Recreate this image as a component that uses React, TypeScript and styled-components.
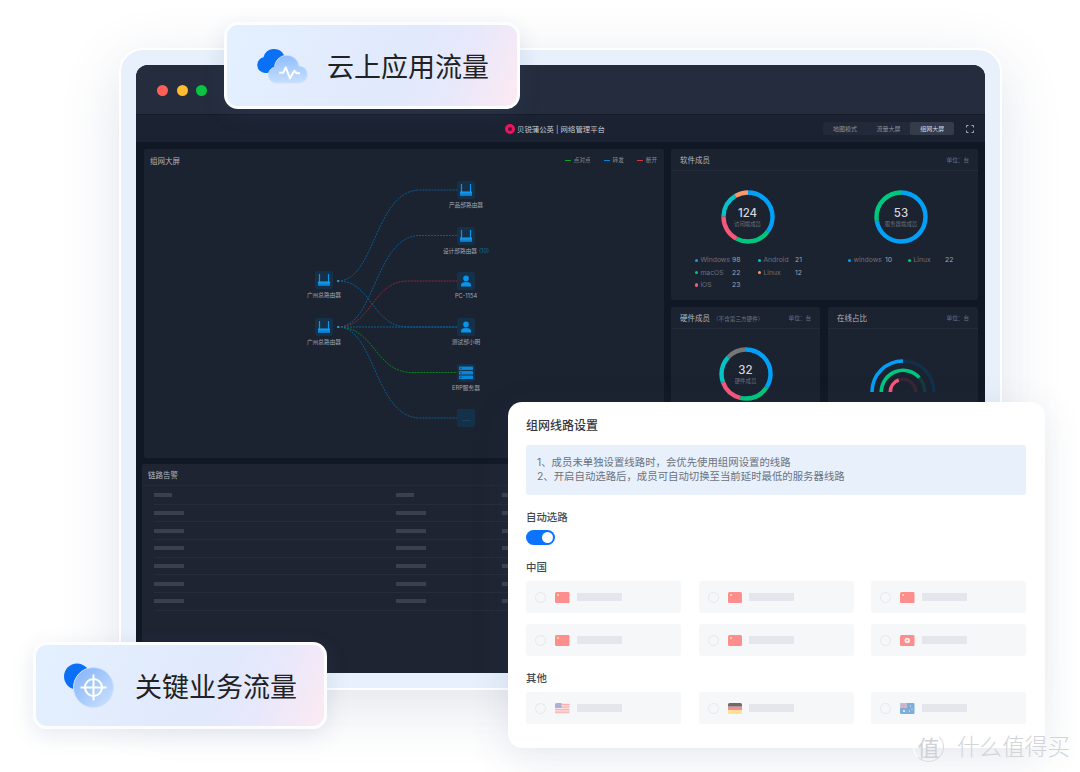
import React from 'react';
import styled, { createGlobalStyle } from 'styled-components';

const GlobalStyle = createGlobalStyle`
  html, body {
    margin: 0;
    padding: 0;
    background: #fff;
  }
  body {
    font-family: 'Inter', 'Noto Sans CJK SC', 'Noto Sans', sans-serif;
  }
  * {
    box-sizing: border-box;
  }
`;

const Page = styled.div`
  position: relative;
  width: 1080px;
  height: 772px;
  padding: 48px 78px 0 119px;
  overflow: hidden;
  background: #fff;
`;

const Device = styled.div`
  width: 883px;
  height: 642px;
  padding: 15px;
  border: 2px solid #fff;
  border-radius: 24px;
  background: #e7f0fb;
  box-shadow: 0 16px 60px rgba(70, 90, 130, 0.16);
`;

const Screen = styled.div`
  display: flex;
  flex-direction: column;
  height: 100%;
  border-radius: 12px 12px 0 0;
  overflow: hidden;
  background: #111825;
`;

const TitleBar = styled.div`
  display: flex;
  align-items: center;
  gap: 8.7px;
  flex: none;
  height: 50px;
  padding-left: 21px;
  padding-top: 2px;
  background: #242c3d;
  border-bottom: 1px solid #151b28;
`;

const Light = styled.span<{ $color: string }>`
  width: 11px;
  height: 11px;
  border-radius: 50%;
  background: ${(p) => p.$color};
`;

const Header = styled.div`
  display: grid;
  grid-template-columns: 1fr auto 1fr;
  align-items: center;
  flex: none;
  height: 27px;
  padding-right: 11px;
  background: #1b2231;
`;

const Brand = styled.div`
  display: flex;
  align-items: center;
  grid-column: 2;
  gap: 2px;
  font-size: 7.4px;
  color: #c6cad2;
  white-space: nowrap;
`;

const BrandMark = styled.span`
  width: 10px;
  height: 10px;
  border: 3px solid #f0135f;
  border-radius: 50%;
  background: #5c1236;
`;

const HeaderRight = styled.div`
  display: flex;
  align-items: center;
  justify-content: flex-end;
  gap: 12px;
`;

const Tabs = styled.div`
  display: flex;
  border-radius: 2px;
  background: #222938;
`;

const Tab = styled.span<{ $active?: boolean }>`
  width: 43.6px;
  height: 13px;
  border-radius: 2px;
  font-size: 6px;
  line-height: 13px;
  text-align: center;
  color: ${(p) => (p.$active ? '#d6d9df' : '#8b919c')};
  background: ${(p) => (p.$active ? '#343b4b' : 'transparent')};
`;

const Body = styled.div`
  display: grid;
  grid-template-columns: 520px 307px;
  gap: 7px;
  flex: 1;
  min-height: 0;
  padding: 7px 8px 0;
`;

const Column = styled.div`
  display: flex;
  flex-direction: column;
  min-height: 0;
  gap: 6px;
`;

const Panel = styled.section`
  background: #1b2230;
  border-radius: 2px;
`;

const GraphPanel = styled(Panel)`
  flex: none;
  height: 309px;
`;

const AlarmPanel = styled(Panel)`
  flex: 1;
  margin-left: -2px;
  background: #1e2432;
`;

const PanelHead = styled.div<{ $line?: boolean }>`
  display: flex;
  align-items: center;
  justify-content: space-between;
  height: 22px;
  padding: 0 8px 0 6px;
  border-bottom: ${(p) => (p.$line ? '1px solid #232a39' : 'none')};
`;

const PanelTitle = styled.h3`
  margin: 0;
  font-size: 7.5px;
  font-weight: 400;
  color: #b2b6be;
  white-space: nowrap;
`;

const TitleNote = styled.small`
  margin-left: 3px;
  font-size: 5.6px;
  color: #6f7580;
`;

const Unit = styled.span`
  font-size: 5.6px;
  color: #6f7580;
  white-space: nowrap;
`;

const LineLegend = styled.div`
  display: flex;
  margin-right: -1px;
  gap: 13px;
  font-size: 5.6px;
  color: #858b96;
`;

const LegendKey = styled.span<{ $color: string }>`
  display: flex;
  align-items: center;
  gap: 3px;
  &::before {
    content: '';
    width: 6px;
    height: 1px;
    background: ${(p) => p.$color};
  }
`;

const Canvas = styled.div`
  position: relative;
  height: 287px;
`;

const Wires = styled.svg`
  position: absolute;
  top: 0;
  left: 0;
`;

const GraphNode = styled.div`
  position: absolute;
  display: flex;
  flex-direction: column;
  align-items: center;
  width: 90px;
  margin-left: -45px;
  margin-top: -9px;
  gap: 2px;
`;

const NodeTile = styled.div`
  display: grid;
  place-items: center;
  width: 18px;
  height: 18px;
  border-radius: 2px;
  background: #153049;
  font-size: 6px;
  color: #62788e;
`;

const NodeLabel = styled.span`
  font-size: 5.7px;
  line-height: 8px;
  color: #a4a9b2;
  white-space: nowrap;
`;

const NodeCount = styled.span`
  margin-left: 2px;
  color: #0f6ea8;
`;

const SoftwarePanel = styled(Panel)`
  flex: none;
  display: flex;
  flex-direction: column;
  height: 151px;
`;

const PanelHeadWide = styled(PanelHead)`
  padding: 0 9px;
`;

const SoftwareGrid = styled.div`
  display: grid;
  grid-template-columns: 153px 154px;
`;

const DonutColumn = styled.div`
  display: flex;
  flex-direction: column;
  padding-top: 19px;
`;

const DonutWrap = styled.div`
  display: grid;
  place-items: center;
  align-self: center;
  width: 54px;
  height: 54px;
  > * {
    grid-area: 1 / 1;
  }
`;

const DonutText = styled.div`
  display: flex;
  flex-direction: column;
  align-items: center;
`;

const DonutValue = styled.strong`
  font-size: 11.5px;
  line-height: 13px;
  font-weight: 500;
  color: #d4d7dc;
`;

const DonutCaption = styled.span`
  font-size: 5.4px;
  line-height: 8px;
  color: #6d727c;
  white-space: nowrap;
`;

const Legend = styled.div<{ $step: number }>`
  display: grid;
  grid-template-columns: repeat(2, ${(p) => p.$step}px);
  grid-auto-rows: 12.4px;
  margin: 10px 0 0 24px;
  font-size: 6.8px;
`;

const LegendItem = styled.div`
  display: grid;
  grid-template-columns: 5.4px 31.6px auto;
  align-items: center;
  line-height: 12px;
`;

const LegendDot = styled.i<{ $color: string }>`
  width: 3.4px;
  height: 3.4px;
  border-radius: 50%;
  background: ${(p) => p.$color};
`;

const LegendName = styled.span`
  color: #6b717c;
`;

const LegendValue = styled.span`
  color: #a2a6ae;
`;

const LowerRow = styled.div`
  display: grid;
  grid-template-columns: 149px 150px;
  gap: 8px;
  flex: 1;
  margin-top: 1px;
`;

const CenterBody = styled.div`
  display: flex;
  justify-content: center;
`;

const HardwareBody = styled(CenterBody)`
  padding-top: 18px;
`;

const OnlineBody = styled(CenterBody)`
  padding-top: 29px;
`;

const AlarmTable = styled.div`
  padding: 1px 0 0 12px;
`;

const AlarmRow = styled.div<{ $head?: boolean }>`
  display: grid;
  grid-template-columns: 242px 106px 40px;
  align-items: center;
  height: 17.7px;
  border-bottom: 1px solid #262c3a;
`;

const SkeletonBar = styled.span<{ $head?: boolean }>`
  width: ${(p) => (p.$head ? 18 : 30)}px;
  height: 4px;
  background: #3a404e;
`;

const Badge = styled.div`
  position: absolute;
  display: flex;
  align-items: center;
  height: 87px;
  border: 3px solid #fbfdff;
  border-radius: 14px;
  background: linear-gradient(115deg, #e3f0fe 0%, #e1e9fd 60%, #e8e8fb 78%, #fdeaf2 100%);
  box-shadow: 0 6px 22px rgba(80, 100, 150, 0.14);
  font-size: 27px;
  color: #222;
  white-space: nowrap;
`;

const CloudBadge = styled(Badge)`
  top: 22px;
  left: 224px;
  width: 296px;
  padding-left: 30px;
  gap: 18px;
`;

const TargetBadge = styled(Badge)`
  top: 642px;
  left: 33px;
  width: 294px;
  padding-left: 28px;
  gap: 21px;
`;

const Dialog = styled.div`
  position: absolute;
  top: 402px;
  left: 508px;
  width: 537px;
  height: 346px;
  padding: 14px 19px 0 18px;
  border-radius: 14px;
  background: #fff;
  box-shadow: 0 10px 40px rgba(60, 80, 120, 0.12);
`;

const DialogTitle = styled.h2`
  margin: 0;
  font-size: 12px;
  line-height: 20px;
  font-weight: 500;
  color: #33373d;
`;

const Notice = styled.div`
  height: 50px;
  margin-top: 9px;
  padding: 11px 11px;
  border-radius: 3px;
  background: #e8f0fc;
  font-size: 10.4px;
  line-height: 14px;
  color: #6b7280;
  white-space: nowrap;
`;

const SectionLabel = styled.div`
  margin-top: 15px;
  font-size: 10.4px;
  line-height: 16px;
  font-weight: 500;
  color: #43474e;
`;

const Toggle = styled.div`
  display: flex;
  justify-content: flex-end;
  align-items: center;
  width: 29px;
  height: 15px;
  margin-top: 4px;
  padding-right: 2px;
  border-radius: 8px;
  background: #0a74ff;
  &::after {
    content: '';
    width: 11px;
    height: 11px;
    border-radius: 50%;
    background: #fff;
  }
`;

const OptionGrid = styled.div`
  display: grid;
  grid-template-columns: repeat(3, 155px);
  grid-auto-rows: 32px;
  justify-content: space-between;
  row-gap: 11px;
  margin-top: 5px;
`;

const Option = styled.div`
  display: flex;
  align-items: center;
  padding-left: 9px;
  border-radius: 3px;
  background: #f6f7f9;
`;

const Radio = styled.span`
  flex: none;
  width: 11px;
  height: 11px;
  margin-right: 9px;
  border: 1px solid #e6e8ec;
  border-radius: 50%;
`;

const FlagBox = styled.svg`
  flex: none;
  margin-right: 7px;
  border-radius: 1.5px;
`;

const OptionBar = styled.span`
  width: 45px;
  height: 7.5px;
  background: #e5e6eb;
`;

const Watermark = styled.div`
  position: absolute;
  right: 10px;
  bottom: 10px;
  display: flex;
  align-items: center;
  gap: 13px;
  color: #d2d4d7;
  font-weight: 300;
  font-size: 22.6px;
  line-height: 30px;
  white-space: nowrap;
`;

const WatermarkSeal = styled.span`
  display: grid;
  place-items: center;
  width: 31px;
  height: 30px;
  border: 1.5px solid #d9dadc;
  border-left-color: #fff;
  border-top-color: #fff;
  border-radius: 50%;
  font-size: 22px;
  font-weight: 400;
  color: #cfd1d4;
`;

const WIRES = [
  { d: 'M338 281C375 281 375 190 420 190L457 190', color: '#0c5c92' },
  { d: 'M338 327C375 327 375 235.5 420 235.5L457 235.5', color: '#0c5c92' },
  { d: 'M338 281C372 281 372 327 408 327L457 327', color: '#0c5c92' },
  { d: 'M338 327C372 327 372 281 408 281L457 281', color: '#8a2a3c' },
  { d: 'M338 327L457 327', color: '#0a5f95' },
  { d: 'M338 327C375 327 375 372.5 412 372.5L457 372.5', color: '#07861f' },
  { d: 'M338 327C375 327 375 418 420 418L457 418', color: '#0c5c92' },
];

const NODES: { x: number; y: number; kind: string; label?: string; count?: string }[] = [
  { x: 466, y: 190, kind: 'router', label: '产品部路由器' },
  { x: 466, y: 235.5, kind: 'router', label: '设计部路由器', count: '(10)' },
  { x: 466, y: 281, kind: 'user', label: 'PC-1154' },
  { x: 466, y: 327, kind: 'user', label: '测试部小明' },
  { x: 466, y: 372.5, kind: 'server', label: 'ERP服务器' },
  { x: 466, y: 418, kind: 'more' },
  { x: 324, y: 280, kind: 'router', label: '广州总路由器' },
  { x: 324, y: 327, kind: 'router', label: '广州总路由器' },
];

const C = { blue: '#02a0f6', green: '#00c77f', red: '#f5587b', cyan: '#05c3c6', orange: '#f49a6c', gray: '#777' };

const DONUTS = {
  visitors: [
    [0.35, C.blue],
    [0.225, C.green],
    [0.175, C.red],
    [0.158, C.cyan],
    [0.092, C.orange],
  ],
  servers: [
    [0.72, C.blue],
    [0.28, C.green],
  ],
  hardware: [
    [0.34, C.blue],
    [0.195, C.green],
    [0.155, C.red],
    [0.175, C.cyan],
    [0.135, C.gray],
  ],
} as Record<string, [number, string][]>;

const RouterIcon = () => (
  <svg width="14" height="14" viewBox="0 0 14 14">
    <defs>
      <linearGradient id="routerBody" x1="0" y1="0" x2="0" y2="1">
        <stop offset="0" stopColor="#12a5f5" />
        <stop offset="1" stopColor="#0a6fc4" />
      </linearGradient>
    </defs>
    <path d="M2.5 1v8M11.5 1v8" stroke="#0a96ea" strokeWidth="1.2" />
    <rect x="1" y="8.5" width="12" height="4.5" rx="0.6" fill="url(#routerBody)" />
  </svg>
);

const UserIcon = () => (
  <svg width="12" height="12" viewBox="0 0 12 12" fill="#0a94ea">
    <circle cx="6" cy="3.4" r="2.8" />
    <path d="M1 11.5V10c0-1.8 1.8-3 5-3s5 1.2 5 3v1.5z" />
  </svg>
);

const ServerIcon = () => (
  <svg width="16" height="14" viewBox="0 0 16 14">
    {[0.5, 5, 9.5].map((y) => (
      <g key={y}>
        <rect x="1" y={y} width="14" height="3.6" rx="0.4" fill="#0a86d8" />
        <circle cx="3" cy={y + 1.8} r="0.7" fill="#123049" />
      </g>
    ))}
  </svg>
);

const NodeIcon = ({ kind }: { kind: string }) => {
  if (kind === 'router') return <RouterIcon />;
  if (kind === 'user') return <UserIcon />;
  if (kind === 'server') return <ServerIcon />;
  return <span>....</span>;
};

const Donut = ({ parts, value, caption }: { parts: [number, string][]; value: number; caption: string }) => {
  const r = 24.5;
  const len = 2 * Math.PI * r;
  let used = 0;
  return (
    <DonutWrap>
      <svg width="54" height="54" viewBox="0 0 54 54">
        <g transform="rotate(-90 27 27)" fill="none" strokeWidth="4.4">
          {parts.map(([part, color]) => {
            const offset = -used * len;
            used += part;
            return (
              <circle
                key={color}
                cx="27"
                cy="27"
                r={r}
                stroke={color}
                strokeDasharray={`${part * len} ${len}`}
                strokeDashoffset={offset}
              />
            );
          })}
        </g>
      </svg>
      <DonutText>
        <DonutValue>{value}</DonutValue>
        <DonutCaption>{caption}</DonutCaption>
      </DonutText>
    </DonutWrap>
  );
};

// half circle from the left end, clockwise, share 0..1
const arcPath = (r: number, share: number) => {
  const a = Math.PI * (1 - share);
  const x = 40 + r * Math.cos(a);
  const y = 34 - r * Math.sin(a);
  return `M${40 - r} 34A${r} ${r} 0 0 1 ${x.toFixed(2)} ${y.toFixed(2)}`;
};

const OnlineArcs = () => (
  <svg width="80" height="34" viewBox="0 0 80 34" fill="none" strokeWidth="3.6">
    <path d={arcPath(31, 1)} stroke="#12304a" />
    <path d={arcPath(21.7, 1)} stroke="#17383c" />
    <path d={arcPath(12.7, 1)} stroke="#352733" />
    <path d={arcPath(31, 0.5)} stroke={C.blue} />
    <path d={arcPath(21.7, 0.77)} stroke={C.green} />
    <path d={arcPath(12.7, 0.39)} stroke={C.red} />
  </svg>
);

const CloudIcon = () => (
  <svg width="52" height="37" viewBox="0 0 52 37">
    <defs>
      <linearGradient id="cloudFront" x1="0.4" y1="0" x2="0.5" y2="1">
        <stop offset="0" stopColor="#8fbdfd" />
        <stop offset="1" stopColor="#c6defd" />
      </linearGradient>
    </defs>
    <path d="M8 26a8 8 0 0 1-1.5-15.8A11 11 0 0 1 27 8L27 26Z" fill="#0a70f5" />
    <path
      d="M19 36a8 8 0 0 1-1.5-15.8A12.3 12.3 0 0 1 42 19a8.5 8.5 0 0 1 0 17Z"
      fill="url(#cloudFront)"
      stroke="#cfe2fd"
      strokeWidth="0.8"
    />
    <path
      d="M22.3 25.7h4l2.4-5.4 4.3 11 4.3-7.6 2.4 2.6H43"
      fill="none"
      stroke="#fff"
      strokeWidth="2"
      strokeLinejoin="round"
    />
  </svg>
);

const TargetIcon = () => (
  <svg width="50" height="46" viewBox="0 0 50 46">
    <defs>
      <linearGradient id="targetFront" x1="0.1" y1="0.1" x2="0.9" y2="0.9">
        <stop offset="0" stopColor="#87b6fb" />
        <stop offset="1" stopColor="#c8defd" />
      </linearGradient>
    </defs>
    <circle cx="13" cy="13.5" r="13" fill="#0a70f5" />
    <circle cx="29.5" cy="24.5" r="20" fill="url(#targetFront)" stroke="#cfe2fd" />
    <g fill="none" stroke="#fff" strokeWidth="2">
      <circle cx="29.5" cy="24.5" r="8.5" />
      <path d="M29.5 11.5v26M16.5 24.5h26" />
    </g>
  </svg>
);

const Flag = ({ kind }: { kind: string }) => (
  <FlagBox width="14.5" height="11" viewBox="0 0 29 22">
    {kind === 'cn' && (
      <>
        <rect width="29" height="22" fill="#fe8e8e" />
        <circle cx="6" cy="6" r="2.2" fill="#fde68a" />
      </>
    )}
    {kind === 'hk' && (
      <>
        <rect width="29" height="22" fill="#fe8e8e" />
        <circle cx="14.5" cy="11" r="5.5" fill="#ffeaea" />
        <circle cx="14.5" cy="11" r="1.6" fill="#fe8e8e" />
      </>
    )}
    {kind === 'us' && (
      <>
        <rect width="29" height="22" fill="#fde3e3" />
        {[2, 7, 12, 17].map((y) => (
          <rect key={y} y={y} width="29" height="2.5" fill="#fcaeae" />
        ))}
        <rect width="13" height="10" fill="#a9b3d4" />
      </>
    )}
    {kind === 'de' && (
      <>
        <rect width="29" height="7.4" fill="#6b6b6b" />
        <rect y="7.4" width="29" height="7.3" fill="#f98d8d" />
        <rect y="14.7" width="29" height="7.3" fill="#fde48a" />
      </>
    )}
    {kind === 'au' && (
      <>
        <rect width="29" height="22" fill="#7eaed8" />
        <rect width="14" height="10" fill="#b9c6e2" />
        <path d="M0 0l14 10M14 0L0 10" stroke="#f5a3a8" strokeWidth="1.6" />
        <path d="M7 0v10M0 5h14" stroke="#f5a3a8" strokeWidth="1.6" />
        <circle cx="21" cy="6" r="1.1" fill="#fff" />
        <circle cx="24" cy="12" r="1.1" fill="#fff" />
        <circle cx="19" cy="16" r="1.1" fill="#fff" />
        <circle cx="8" cy="16" r="1.8" fill="#fff" />
      </>
    )}
  </FlagBox>
);

const RouteOption = ({ flag }: { flag: string }) => (
  <Option>
    <Radio />
    <Flag kind={flag} />
    <OptionBar />
  </Option>
);

const App = () => (
  <Page>
    <GlobalStyle />
    <Device>
      <Screen>
        <TitleBar>
          <Light $color="#ff5f57" />
          <Light $color="#febc2e" />
          <Light $color="#0ac244" />
        </TitleBar>
        <Header>
          <Brand>
            <BrandMark />
            贝锐蒲公英 | 网络管理平台
          </Brand>
          <HeaderRight>
            <Tabs>
              <Tab>地图模式</Tab>
              <Tab>流量大屏</Tab>
              <Tab $active>组网大屏</Tab>
            </Tabs>
            <svg width="8" height="8" viewBox="0 0 8 8" fill="none" stroke="#c4c8cf" strokeWidth="0.8">
              <path d="M.5 2.5v-2h2M5.5.5h2v2M7.5 5.5v2h-2M2.5 7.5h-2v-2" />
            </svg>
          </HeaderRight>
        </Header>
        <Body>
          <Column>
            <GraphPanel>
              <PanelHead>
                <PanelTitle>组网大屏</PanelTitle>
                <LineLegend>
                  <LegendKey $color="#0aa31f">点对点</LegendKey>
                  <LegendKey $color="#0a84d8">转发</LegendKey>
                  <LegendKey $color="#d8323f">断开</LegendKey>
                </LineLegend>
              </PanelHead>
              <Canvas>
                <Wires width="520" height="287" viewBox="144 171 520 287" fill="none">
                  {WIRES.map((w) => (
                    <path key={w.d} d={w.d} stroke={w.color} strokeWidth="1" strokeDasharray="2 1" />
                  ))}
                  <circle cx="338" cy="281" r="1" fill="#3aa6e0" />
                  <circle cx="338" cy="327" r="1" fill="#3aa6e0" />
                </Wires>
                {NODES.map((n, i) => (
                  <GraphNode key={i} style={{ left: n.x - 144, top: n.y - 171 }}>
                    <NodeTile>
                      <NodeIcon kind={n.kind} />
                    </NodeTile>
                    {n.label && (
                      <NodeLabel>
                        {n.label}
                        {n.count && <NodeCount>{n.count}</NodeCount>}
                      </NodeLabel>
                    )}
                  </GraphNode>
                ))}
              </Canvas>
            </GraphPanel>
            <AlarmPanel>
              <PanelHead $line>
                <PanelTitle>链路告警</PanelTitle>
              </PanelHead>
              <AlarmTable>
                <AlarmRow>
                  <SkeletonBar $head />
                  <SkeletonBar $head />
                  <SkeletonBar $head />
                </AlarmRow>
                {[0, 1, 2, 3, 4, 5].map((row) => (
                  <AlarmRow key={row}>
                    <SkeletonBar />
                    <SkeletonBar />
                    <SkeletonBar />
                  </AlarmRow>
                ))}
              </AlarmTable>
            </AlarmPanel>
          </Column>
          <Column>
            <SoftwarePanel>
              <PanelHeadWide $line>
                <PanelTitle>软件成员</PanelTitle>
                <Unit>单位：台</Unit>
              </PanelHeadWide>
              <SoftwareGrid>
                <DonutColumn>
                  <Donut parts={DONUTS.visitors} value={124} caption="访问端成员" />
                  <Legend $step={63}>
                    <LegendItem>
                      <LegendDot $color={C.blue} />
                      <LegendName>Windows</LegendName>
                      <LegendValue>98</LegendValue>
                    </LegendItem>
                    <LegendItem>
                      <LegendDot $color={C.cyan} />
                      <LegendName>Android</LegendName>
                      <LegendValue>21</LegendValue>
                    </LegendItem>
                    <LegendItem>
                      <LegendDot $color={C.green} />
                      <LegendName>macOS</LegendName>
                      <LegendValue>22</LegendValue>
                    </LegendItem>
                    <LegendItem>
                      <LegendDot $color={C.orange} />
                      <LegendName>Linux</LegendName>
                      <LegendValue>12</LegendValue>
                    </LegendItem>
                    <LegendItem>
                      <LegendDot $color={C.red} />
                      <LegendName>iOS</LegendName>
                      <LegendValue>23</LegendValue>
                    </LegendItem>
                  </Legend>
                </DonutColumn>
                <DonutColumn>
                  <Donut parts={DONUTS.servers} value={53} caption="服务器端成员" />
                  <Legend $step={60}>
                    <LegendItem>
                      <LegendDot $color={C.blue} />
                      <LegendName>windows</LegendName>
                      <LegendValue>10</LegendValue>
                    </LegendItem>
                    <LegendItem>
                      <LegendDot $color={C.green} />
                      <LegendName>Linux</LegendName>
                      <LegendValue>22</LegendValue>
                    </LegendItem>
                  </Legend>
                </DonutColumn>
              </SoftwareGrid>
            </SoftwarePanel>
            <LowerRow>
              <Panel>
                <PanelHeadWide $line>
                  <PanelTitle>
                    硬件成员<TitleNote>（不含第三方硬件）</TitleNote>
                  </PanelTitle>
                  <Unit>单位：台</Unit>
                </PanelHeadWide>
                <HardwareBody>
                  <Donut parts={DONUTS.hardware} value={32} caption="硬件成员" />
                </HardwareBody>
              </Panel>
              <Panel>
                <PanelHeadWide $line>
                  <PanelTitle>在线占比</PanelTitle>
                  <Unit>单位：台</Unit>
                </PanelHeadWide>
                <OnlineBody>
                  <OnlineArcs />
                </OnlineBody>
              </Panel>
            </LowerRow>
          </Column>
        </Body>
      </Screen>
    </Device>

    <CloudBadge>
      <CloudIcon />
      云上应用流量
    </CloudBadge>
    <TargetBadge>
      <TargetIcon />
      关键业务流量
    </TargetBadge>

    <Dialog>
      <DialogTitle>组网线路设置</DialogTitle>
      <Notice>
        1、成员未单独设置线路时，会优先使用组网设置的线路
        <br />
        2、开启自动选路后，成员可自动切换至当前延时最低的服务器线路
      </Notice>
      <SectionLabel>自动选路</SectionLabel>
      <Toggle />
      <SectionLabel>中国</SectionLabel>
      <OptionGrid>
        {['cn', 'cn', 'cn', 'cn', 'cn', 'hk'].map((flag, i) => (
          <RouteOption key={i} flag={flag} />
        ))}
      </OptionGrid>
      <SectionLabel>其他</SectionLabel>
      <OptionGrid>
        {['us', 'de', 'au'].map((flag) => (
          <RouteOption key={flag} flag={flag} />
        ))}
      </OptionGrid>
    </Dialog>

    <Watermark>
      <WatermarkSeal>值</WatermarkSeal>
      什么值得买
    </Watermark>
  </Page>
);

export default App;
